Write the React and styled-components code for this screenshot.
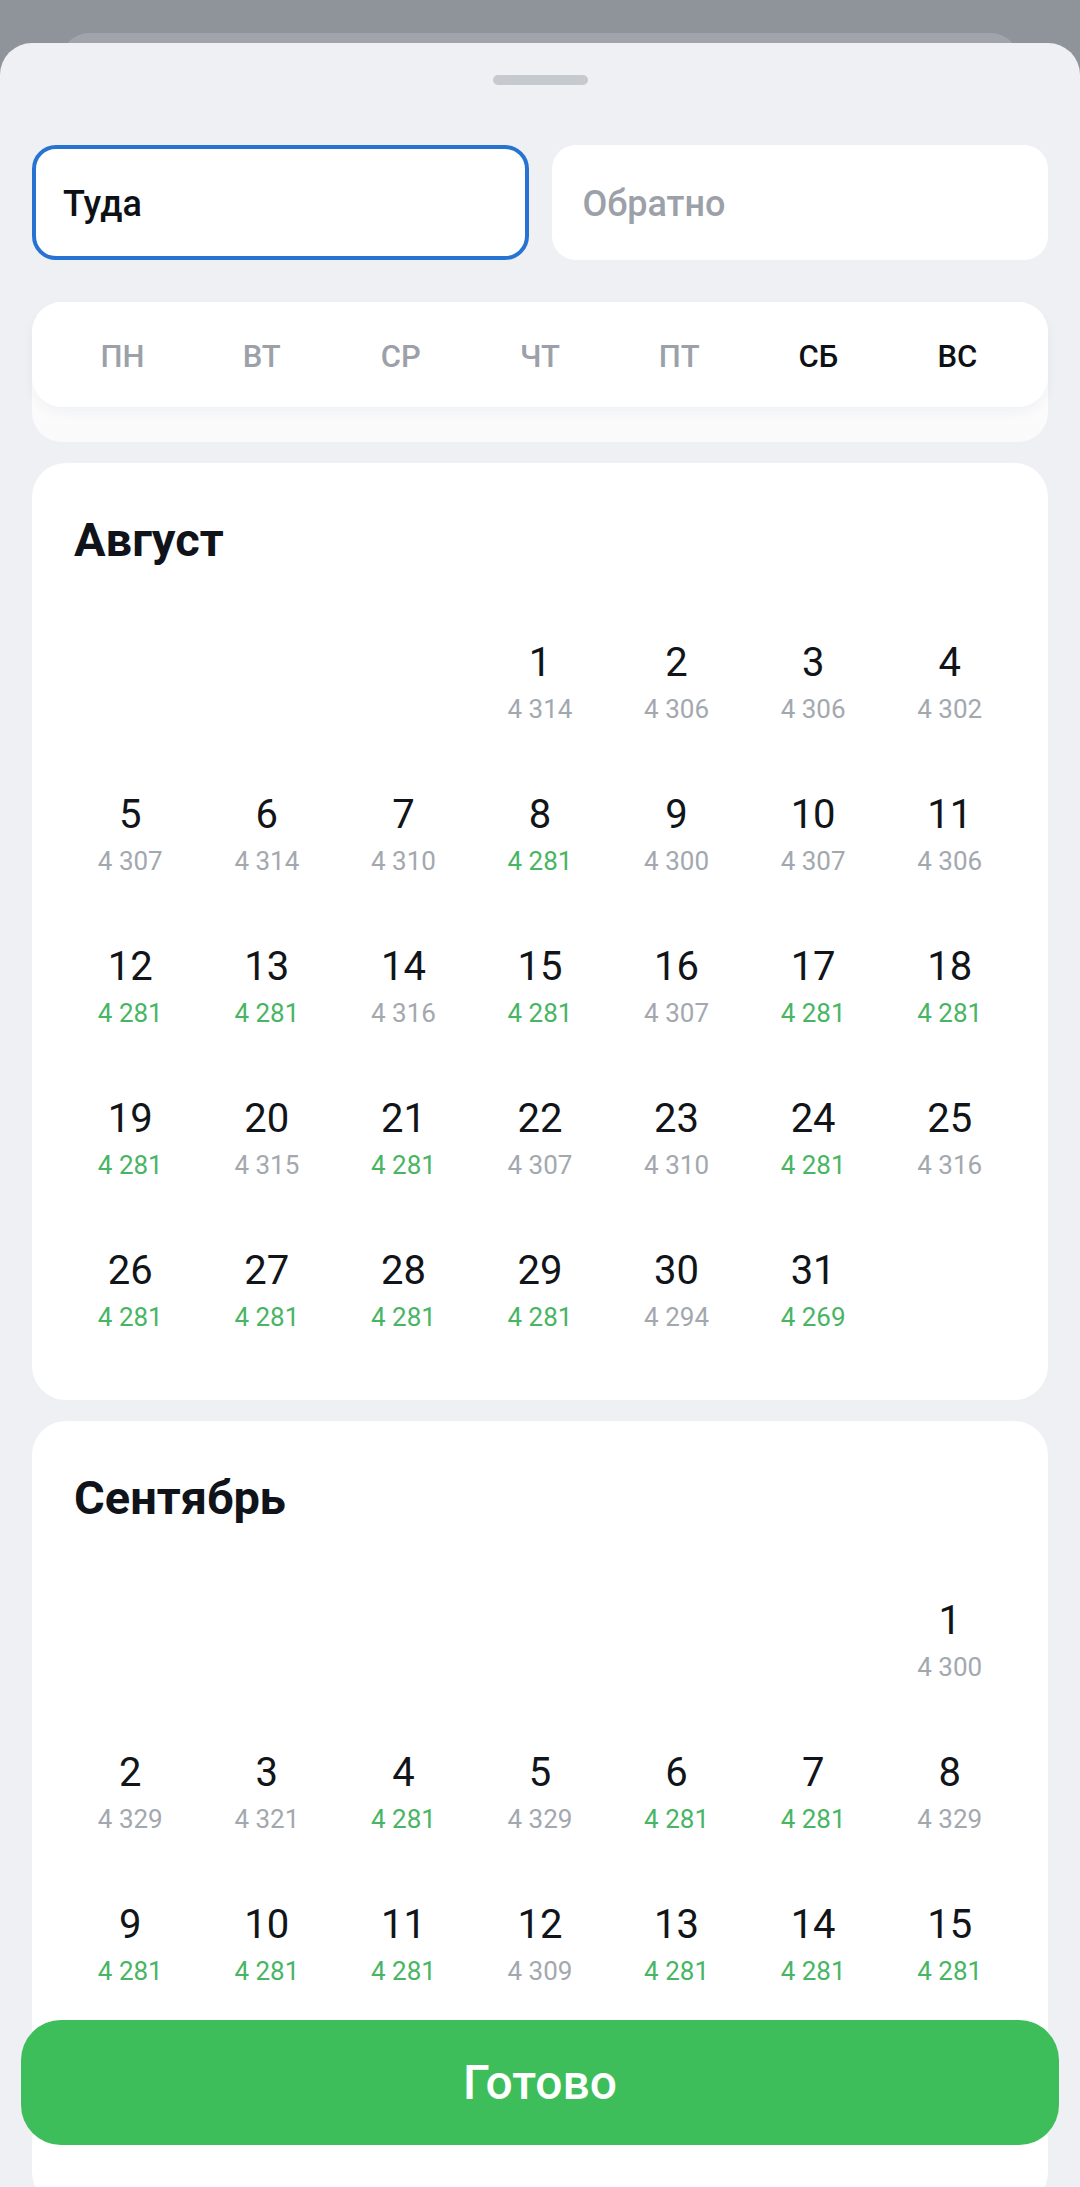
import React from 'react';
import styled, { createGlobalStyle } from 'styled-components';

const GlobalStyle = createGlobalStyle`
  html, body {
    margin: 0;
    padding: 0;
    background: #8f949b;
    font-family: Roboto, "Noto Sans", "Liberation Sans", sans-serif;
    -webkit-font-smoothing: antialiased;
  }
  * { box-sizing: border-box; }
`;

const Screen = styled.div`
  height: 100vh;
  overflow: hidden;
  padding-top: 33px;
`;

const PeekWrap = styled.div`
  height: 10px;
  overflow: hidden;
  margin: 0 61px;
`;

const Peek = styled.div`
  height: 40px;
  border-radius: 28px 28px 0 0;
  background: #a1a5ab;
`;

const Sheet = styled.div`
  background: #eff0f4;
  border-radius: 32px 32px 0 0;
  padding: 32px 32px 0;
  min-height: 100%;
`;

const Handle = styled.div`
  width: 95px;
  height: 10px;
  border-radius: 5px;
  background: #c6c9ce;
  margin: 0 auto;
`;

const Fields = styled.div`
  display: grid;
  grid-template-columns: 1fr 1fr;
  gap: 23px;
  margin-top: 60px;
`;

const Field = styled.div`
  height: 115px;
  display: flex;
  align-items: center;
  padding: 3px 27px 0;
  background: #fff;
  border-radius: 24px;
  border: 4px solid ${p => (p.$active ? '#2773d1' : 'transparent')};
  font-size: 36px;
  font-weight: 500;
  color: ${p => (p.$active ? '#0d1116' : '#9ca1a9')};
`;

const WeekCard = styled.div`
  margin-top: 42px;
  height: 140px;
  background: linear-gradient(#ffffff, #fafafb);
  border-radius: 30px;
`;

const WeekHeader = styled.div`
  height: 105px;
  display: grid;
  grid-template-columns: repeat(7, 1fr);
  align-items: center;
  padding: 4px 21px 0;
  background: #fff;
  border-radius: 30px;
  box-shadow: 0 6px 12px rgba(30, 40, 60, 0.045);
`;

const WeekDay = styled.div`
  text-align: center;
  font-size: 31px;
  font-weight: 500;
  color: ${p => (p.$weekend ? '#0d1116' : '#9ca1a9')};
`;

const MonthCard = styled.section`
  margin-top: 21px;
  background: #fff;
  border-radius: 34px;
  padding: 51px 30px 68px;
`;

const MonthTitle = styled.h2`
  margin: 0 0 0 12px;
  font-size: 47px;
  line-height: 52px;
  font-weight: 700;
  color: #10141a;
`;

const DaysGrid = styled.div`
  margin-top: 73px;
  display: grid;
  grid-template-columns: repeat(7, 1fr);
  row-gap: 67px;
`;

const DayCell = styled.div`
  display: flex;
  flex-direction: column;
  align-items: center;
  gap: 7px;
`;

const DayNum = styled.div`
  font-size: 40px;
  line-height: 48px;
  color: #111418;
`;

const Price = styled.div`
  font-size: 26px;
  line-height: 30px;
  color: ${p => (p.$cheap ? '#48b564' : '#a3a8af')};
`;

const DoneButton = styled.button`
  position: fixed;
  left: 21px;
  right: 21px;
  bottom: 42px;
  height: 125px;
  border: none;
  border-radius: 40px;
  background: #3dbe5a;
  color: #fff;
  font-family: inherit;
  font-size: 48px;
  font-weight: 500;
  cursor: pointer;
`;

const weekDays = ['ПН', 'ВТ', 'СР', 'ЧТ', 'ПТ', 'СБ', 'ВС'];

const months = [
  {
    name: 'Август',
    offset: 3,
    prices: [
      4314, 4306, 4306, 4302, 4307, 4314, 4310, 4281, 4300, 4307, 4306,
      4281, 4281, 4316, 4281, 4307, 4281, 4281, 4281, 4315, 4281, 4307,
      4310, 4281, 4316, 4281, 4281, 4281, 4281, 4294, 4269,
    ],
  },
  {
    name: 'Сентябрь',
    offset: 6,
    prices: [
      4300, 4329, 4321, 4281, 4329, 4281, 4281, 4329, 4281, 4281, 4281,
      4309, 4281, 4281, 4281, 4302, 4296, 4281, 4281, 4310, 4281, 4281,
    ],
  },
];

const formatPrice = n => {
  const s = String(n);
  return s.slice(0, s.length - 3) + ' ' + s.slice(-3);
};

const Month = ({ month }) => (
  <MonthCard>
    <MonthTitle>{month.name}</MonthTitle>
    <DaysGrid>
      {Array.from({ length: month.offset }).map((_, i) => (
        <div key={'e' + i} />
      ))}
      {month.prices.map((price, i) => (
        <DayCell key={i}>
          <DayNum>{i + 1}</DayNum>
          <Price $cheap={price <= 4281}>{formatPrice(price)}</Price>
        </DayCell>
      ))}
    </DaysGrid>
  </MonthCard>
);

export default function App() {
  return (
    <>
      <GlobalStyle />
      <Screen>
        <PeekWrap>
          <Peek />
        </PeekWrap>
        <Sheet>
          <Handle />
          <Fields>
            <Field $active>Туда</Field>
            <Field>Обратно</Field>
          </Fields>
          <WeekCard>
            <WeekHeader>
              {weekDays.map((d, i) => (
                <WeekDay key={d} $weekend={i > 4}>{d}</WeekDay>
              ))}
            </WeekHeader>
          </WeekCard>
          {months.map(m => (
            <Month key={m.name} month={m} />
          ))}
        </Sheet>
        <DoneButton>Готово</DoneButton>
      </Screen>
    </>
  );
}
